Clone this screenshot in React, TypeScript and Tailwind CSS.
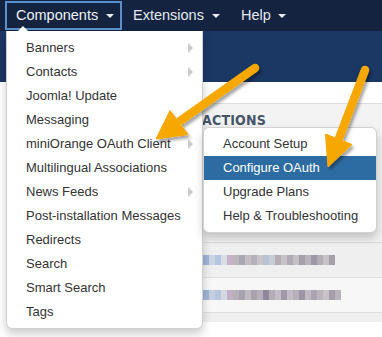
import React from "react";

const mainItems: { label: string; sub?: boolean }[] = [
  { label: "Banners", sub: true },
  { label: "Contacts", sub: true },
  { label: "Joomla! Update" },
  { label: "Messaging" },
  { label: "miniOrange OAuth Client", sub: true },
  { label: "Multilingual Associations" },
  { label: "News Feeds", sub: true },
  { label: "Post-installation Messages" },
  { label: "Redirects" },
  { label: "Search" },
  { label: "Smart Search" },
  { label: "Tags" },
];

const subItems = ["Account Setup", "Configure OAuth", "Upgrade Plans", "Help & Troubleshooting"];

const mosaic1 = [
  "#9fb5d6", "#c9d4e4", "#b4c6df", "#d9dfe8", "#c6b3c9", "#bcb6bd", "#a9a8b2", "#c2bcc4", "#b6b0b8",
  "#c9c4c9", "#b9c3d2", "#c6cdd6", "#b3aeb6", "#c6c2c7", "#b0aab4", "#c4bfc6", "#a6a0ac", "#b9b4bc",
  "#9e97a6", "#b3adb6", "#c7c2c8", "#a59fab",
];
const mosaic2 = [
  "#9fb5d6", "#c4cfe0", "#b7c6dc", "#d3d9e3", "#c2b1c6", "#b6b1b8", "#a7a3ae", "#bfb9c2", "#a9a2ad",
  "#b7b0ba", "#8f889c", "#b4aeb8", "#c4bfc6", "#9f98a6", "#c3bec5", "#b7b1bb", "#9c95a3", "#c0bac3",
  "#aaa4b0", "#bbb5be", "#c8c3c9", "#a49eaa", "#b9b4bc",
];

function Caret() {
  return <span className="inline-block w-0 h-0 border-x-[4px] border-x-transparent border-t-[4px] border-t-[#e9eef5]" />;
}

function Mosaic({ colors }: { colors: string[] }) {
  return (
    <div className="flex h-[10px] blur-[0.6px]">
      {colors.map((c, i) => (
        <div key={i} className="w-[6px] h-[10px]" style={{ backgroundColor: c }} />
      ))}
    </div>
  );
}

export default function App() {
  return (
    <div className="relative w-[382px] h-[337px] overflow-hidden bg-white font-['Liberation_Sans',Arial,sans-serif]">
      {/* top nav */}
      <div className="h-[31px] bg-[#14233f] flex items-start">
        <div className="ml-[5px] mt-[1px] w-[117px] h-[29px] border-2 border-[#5a91cc] flex items-center pl-[9px] text-[14.5px] text-[#eef2f7]">
          <span>Components</span>
          <span className="ml-[8px] mt-[1px] flex"><Caret /></span>
        </div>
        <div className="ml-[11px] h-[31px] flex items-center text-[14.5px] text-[#e4eaf2]">
          <span>Extensions</span>
          <span className="ml-[8px] mt-[1px] flex"><Caret /></span>
        </div>
        <div className="ml-[21px] h-[31px] flex items-center text-[14.5px] text-[#e4eaf2]">
          <span>Help</span>
          <span className="ml-[7px] mt-[1px] flex"><Caret /></span>
        </div>
      </div>
      {/* blue band */}
      <div className="h-[51px] bg-[#1b3764]" />
      <div className="h-[21px] bg-white" />
      {/* table area */}
      <div className="ml-[100px]">
        <div className="h-[34px] bg-[#f3f3f3] border-t border-[#dedede] flex items-center pl-[102px]">
          <span className="font-['Liberation_Sans_Narrow','DejaVu_Sans_Condensed',sans-serif] font-bold text-[14px] text-[#45556a] tracking-[0.2px]">ACTIONS</span>
        </div>
        <div className="h-[105px] bg-[#f1f1f1]" />
        <div className="h-[35px] bg-[#efefef] border-t border-[#dcdcdc] flex items-center pl-[103px]">
          <Mosaic colors={mosaic1} />
        </div>
        <div className="h-[35px] bg-[#f7f7f7] border-t border-[#dedede] flex items-center pl-[103px]">
          <Mosaic colors={mosaic2} />
        </div>
        <div className="h-[10px] bg-[#efefef] border-t border-[#dedede]" />
      </div>

      {/* notch */}
      <div className="absolute left-[18px] top-[26px] w-0 h-0 border-x-[5px] border-x-transparent border-b-[5px] border-b-white" />

      {/* main dropdown */}
      <div className="absolute left-[6px] top-[31px] w-[197px] bg-white border border-[rgba(0,0,0,0.18)] border-t-0 rounded-b-[6px] shadow-[0_5px_10px_rgba(0,0,0,0.2)] pt-[5px] pb-[4px]">
        {mainItems.map((it) => (
          <div key={it.label} className="h-[24px] flex items-center pl-[19px] pr-[9px] text-[13px] text-[#333]">
            <span>{it.label}</span>
            {it.sub && (
              <span className="ml-auto w-0 h-0 border-y-[5px] border-y-transparent border-l-[5px] border-l-[#cccccc]" />
            )}
          </div>
        ))}
      </div>

      {/* submenu */}
      <div className="absolute left-[203px] top-[127px] w-[174px] bg-white border border-[rgba(0,0,0,0.18)] rounded-[6px] shadow-[0_5px_10px_rgba(0,0,0,0.2)] py-[4px]">
        {subItems.map((s) => (
          <div
            key={s}
            className={
              s === "Configure OAuth"
                ? "h-[24px] flex items-center pl-[19px] text-[13px] text-white bg-[#2d6ca2]"
                : "h-[24px] flex items-center pl-[19px] text-[13px] text-[#333]"
            }
          >
            {s}
          </div>
        ))}
      </div>

      {/* annotation arrows */}
      <svg className="absolute left-0 top-0 pointer-events-none" width="382" height="337" viewBox="0 0 382 337">
        <defs>
          <filter id="sh" x="-20%" y="-20%" width="140%" height="140%">
            <feDropShadow dx="2" dy="3" stdDeviation="1.6" floodColor="#000" floodOpacity="0.35" />
          </filter>
        </defs>
        <g filter="url(#sh)" fill="#f6a800" stroke="#f6a800">
          <line x1="255" y1="68" x2="180" y2="121" strokeWidth="8.5" strokeLinecap="round" />
          <polygon points="156,139 170,110.5 188,134.5" strokeWidth="1" strokeLinejoin="round" />
          <line x1="365" y1="70" x2="338" y2="141" strokeWidth="8.5" strokeLinecap="round" />
          <polygon points="328,167 325.5,134 352,144.5" strokeWidth="1" strokeLinejoin="round" />
        </g>
      </svg>
    </div>
  );
}
